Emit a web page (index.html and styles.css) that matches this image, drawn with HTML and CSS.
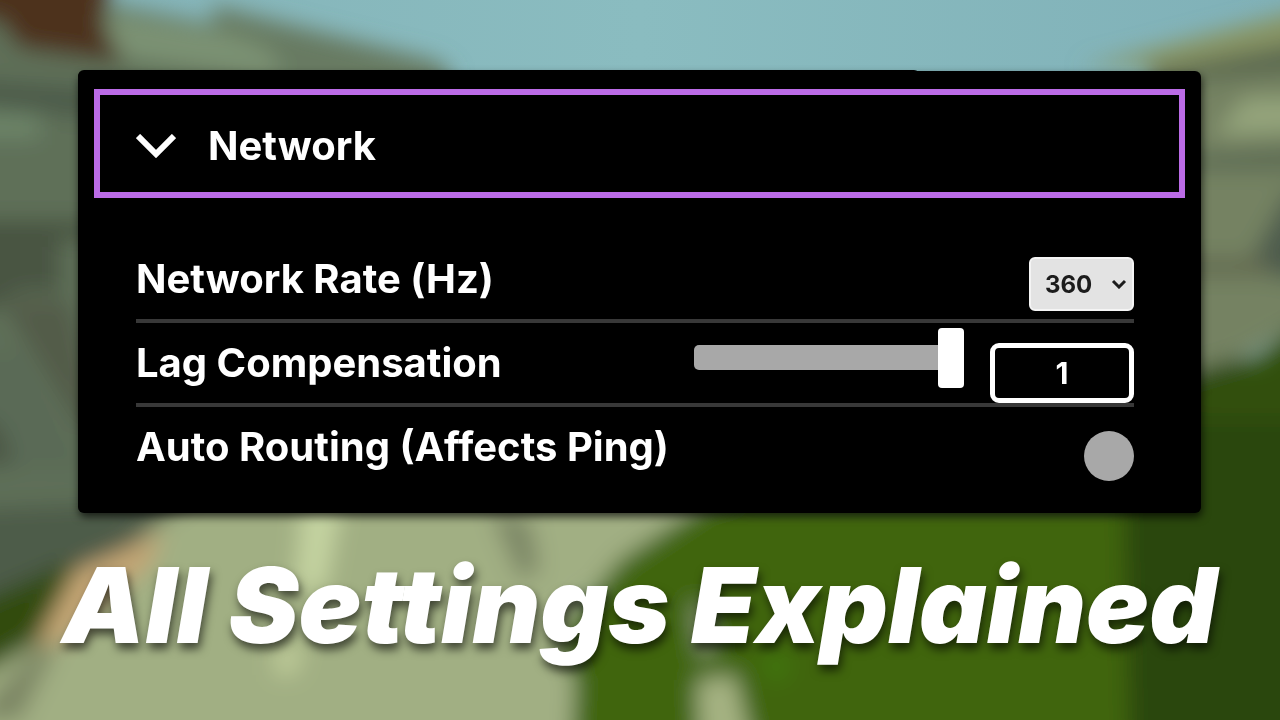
FILE: index.html
```html
<!DOCTYPE html>
<html lang="en">
<head>
    <meta charset="UTF-8" />
    <meta name="viewport" content="width=device-width, initial-scale=1.0" />
    <title>All Settings Explained</title>
    <link rel="stylesheet" href="styles.css">
</head>
<body>
    <!-- blurred game scene -->
    <svg class="scene" viewBox="0 0 1280 720" preserveAspectRatio="none" aria-hidden="true">
        <defs>
            <linearGradient id="sky" x1="0" x2="1">
                <stop offset="0" stop-color="#84b3b8" />
                <stop offset="0.5" stop-color="#8abcc0" />
                <stop offset="1" stop-color="#80b1b8" />
            </linearGradient>
            <filter id="soft" x="-10%" y="-10%" width="120%" height="120%">
                <feGaussianBlur stdDeviation="11" />
            </filter>
        </defs>
        <rect width="1280" height="720" fill="url(#sky)" />
        <g filter="url(#soft)">
            <path fill="#5f7059" d="M-60 20 L110 5 L450 70 L450 620 L-60 640Z" />
            <path fill="#7b9273" d="M100 12 L280 42 L290 80 L120 58Z" />
            <path fill="#687a62" d="M212 5 L440 62 L440 100 L290 90 L270 50 L215 28Z" />
            <path fill="#4d311f" d="M-50 -50 H112 L104 28 L124 62 L20 48 L0 20 H-50Z" />
            <path fill="#4c5a49" d="M-60 78 L90 88 V118 L-60 100Z" />
            <path fill="#6d8569" d="M-60 112 L40 116 V138 L-60 138Z" />
            <path fill="#47533f" d="M-60 220 H90 V240 H-60Z" />
            <path fill="#4a5542" d="M-60 240 H60 V292 H20 L-60 340Z" />
            <path fill="#525b49" d="M0 300 H70 L100 430 H80Z" />
            <path fill="#5a6b56" d="M-60 350 L20 350 L90 470 H-60Z" />
            <path fill="#4b5645" d="M-60 400 L0 425 L15 465 L-60 465Z" />
            <path fill="#4d5b49" d="M-60 510 L190 500 L60 590 L-60 620Z" />
            <path fill="#304c0c" d="M-60 618 L75 560 L50 650 L-60 700Z" />
            <path fill="#a1af83" d="M-60 700 L40 640 L150 530 L200 490 H740 L580 600 V780 H-60Z" />
            <path fill="#c5a675" d="M75 570 L165 532 L150 565 L95 610 L45 660 L35 645Z" />
            <path fill="#7c8564" d="M40 645 L60 640 L20 720 H-30Z" />
            <path fill="#c4d3a0" d="M303 500 H342 L325 590 H295Z" />
            <path fill="#becb98" d="M275 645 L305 645 L295 675 L275 675Z" />
            <path fill="#7d8766" d="M490 510 L530 520 L540 570 L520 580Z" />
            <path fill="#41650d" d="M570 780 L575 680 L555 640 L620 560 L710 500 H1340 V780Z" />
            <path fill="#2c4709" d="M1120 360 H1340 V780 H1130Z" />
            <path fill="#758262" d="M1090 65 L1340 10 V300 L1250 355 L1150 385 V60Z" />
            <path fill="#889464" d="M1080 68 L1340 0 V34 L1170 65Z" />
            <path fill="#5b6950" d="M1150 72 L1340 36 V70 L1150 84Z" />
            <path fill="#94a47c" d="M1245 98 H1340 V130 L1215 135Z" />
            <path fill="#5c6b52" d="M1150 156 L1340 146 V170 H1150Z" />
            <path fill="#4e5c4d" d="M1290 190 L1340 190 V290 L1245 270Z" />
            <path fill="#62694f" d="M1150 258 H1270 V276 H1150Z" />
            <path fill="#32500b" d="M1190 392 L1250 365 L1340 290 V420 H1190Z" />
            <path fill="#8f9b76" d="M690 600 L705 610 L715 650 L700 660Z" />
            <path fill="#a5b282" d="M697 680 L735 675 L755 760 H700Z" />
            <path fill="#40780d" d="M762 655 L790 655 L785 680 L768 680Z" />
        </g>
    </svg>

    <main class="page">
        <section class="panel">
            <button class="section-header" type="button" aria-expanded="true">
                <svg class="chevron" viewBox="0 0 40 24" aria-hidden="true">
                    <path d="M2 2 L20 20 L38 2" />
                </svg>
                <span>Network</span>
            </button>

            <div class="settings">
                <div class="row">
                    <label for="rate">Network Rate (Hz)</label>
                    <div class="select-box">
                        <select id="rate">
                            <option>60</option>
                            <option>120</option>
                            <option selected>360</option>
                        </select>
                        <svg viewBox="0 0 16 10" aria-hidden="true">
                            <path d="M2 2 L8 8 L14 2" />
                        </svg>
                    </div>
                </div>
                <div class="row">
                    <label for="lag">Lag Compensation</label>
                    <div class="slider-group">
                        <input type="range" id="lag" min="0" max="1" step="0.1" value="1">
                        <input type="text" id="lag-value" value="1" aria-label="Lag Compensation value">
                    </div>
                </div>
                <div class="row">
                    <label for="routing">Auto Routing (Affects Ping)</label>
                    <input type="checkbox" id="routing">
                </div>
            </div>
        </section>

        <h1>All Settings Explained</h1>
    </main>

    <script>
        const slider = document.querySelector('#lag');
        const lagValue = document.querySelector('#lag-value');

        slider.oninput = () => {
            lagValue.value = slider.value;
        };

        lagValue.onchange = () => {
            slider.value = lagValue.value;
        };
    </script>
</body>
</html>
```
FILE: styles.css
```css
* {
    margin: 0;
    padding: 0;
    box-sizing: border-box;
}

body {
    min-height: 100vh;
    background-color: #41650d;
    color: white;
    font-family: Inter, 'Open Sans', sans-serif;
    font-weight: 700;
    overflow-x: hidden;
}

.scene {
    position: fixed;
    top: 0;
    left: 0;
    width: 100%;
    height: 100%;
    z-index: -1;
}

.page {
    padding: 71px 79px 0 78px;
}

.panel {
    position: relative;
    padding: 18px 16px 22px;
    background-color: black;
    border-radius: 6px;
    box-shadow: 1px 4px 8px rgba(0, 0, 0, 0.7);
}

/* raised lip along the top edge */
.panel::before {
    content: '';
    position: absolute;
    top: -1px;
    left: 0;
    width: 75%;
    height: 12px;
    border-radius: 6px;
    background-color: black;
}

.section-header {
    position: relative;
    width: 100%;
    height: 109px;
    padding: 4px 36px 0;
    display: flex;
    align-items: center;
    gap: 32px;
    border: 6px solid #bb6be6;
    background-color: black;
    color: white;
    font: inherit;
    font-size: 40px;
    line-height: 48px;
    cursor: pointer;
}

.chevron {
    width: 40px;
    height: 24px;
    fill: none;
    stroke: white;
    stroke-width: 6;
}

.settings {
    padding: 41px 51px 0 42px;
}

.row {
    min-height: 84px;
    display: flex;
    justify-content: space-between;
    align-items: flex-start;
    border-bottom: 4px solid #383838;
}

.row:last-child {
    border-bottom: none;
}

.row label {
    font-size: 40px;
    line-height: 80px;
}

.select-box {
    position: relative;
    margin-top: 18px;
}

.select-box select {
    appearance: none;
    display: block;
    width: 105px;
    height: 54px;
    padding-left: 14px;
    border: 2px solid #f4f4f4;
    border-radius: 6px;
    background-color: #e3e3e3;
    color: #1c1c1c;
    font: inherit;
    font-size: 24px;
}

.select-box svg {
    position: absolute;
    top: 22px;
    right: 7px;
    width: 16px;
    height: 10px;
    fill: none;
    stroke: #1c1c1c;
    stroke-width: 3;
    pointer-events: none;
}

.slider-group {
    display: flex;
    align-items: flex-start;
    gap: 26px;
}

#lag {
    appearance: none;
    width: 270px;
    height: 25px;
    margin-top: 22px;
    border-radius: 5px;
    background-color: #a8a8a8;
}

#lag::-webkit-slider-thumb {
    appearance: none;
    width: 26px;
    height: 60px;
    border-radius: 4px;
    background-color: white;
}

#lag-value {
    width: 144px;
    height: 60px;
    margin-top: 20px;
    border: 5px solid white;
    border-radius: 9px;
    background-color: black;
    color: white;
    font: inherit;
    font-size: 30px;
    text-align: center;
}

#routing {
    appearance: none;
    width: 50px;
    height: 50px;
    margin-top: 24px;
    border-radius: 50%;
    background-color: #a8a8a8;
}

#routing:checked {
    background-color: #bb6be6;
}

h1 {
    margin: 32px -40px 0;
    font-size: 105px;
    line-height: 120px;
    font-weight: 900;
    font-style: italic;
    font-variant-ligatures: none;
    font-feature-settings: 'calt' 0;
    text-align: center;
    white-space: nowrap;
    text-shadow: 2px 6px 10px rgba(0, 0, 0, 0.6);
}
```
